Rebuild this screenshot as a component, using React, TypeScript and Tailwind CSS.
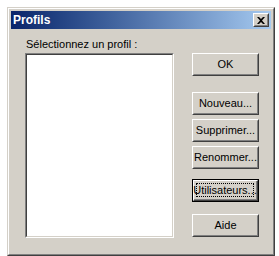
const buttons = [
  { label: 'OK', mt: 'mt-0' },
  { label: 'Nouveau...', mt: 'mt-[16px]' },
  { label: 'Supprimer...', mt: 'mt-[4px]' },
  { label: 'Renommer...', mt: 'mt-[4px]' },
];

function Button({ label, className = '' }: { label: string; className?: string }) {
  return (
    <div className={`w-[67px] h-[23px] border border-t-white border-l-white border-r-[#404040] border-b-[#404040] ${className}`}>
      <div className="h-full border border-t-[#d4d0c8] border-l-[#d4d0c8] border-r-[#808080] border-b-[#808080] flex items-center justify-center text-[11px] text-black">
        {label}
      </div>
    </div>
  );
}

export default function App() {
  return (
    <div className="min-h-screen bg-white pt-[7px] pl-[7px]" style={{ fontFamily: '"Liberation Sans", Arial, sans-serif' }}>
      <div className="w-[268px] h-[249px] bg-[#d4d0c8] border border-t-[#d4d0c8] border-l-[#d4d0c8] border-r-[#404040] border-b-[#404040]">
        <div className="h-full border border-t-white border-l-white border-r-[#808080] border-b-[#808080] p-[2px] flex flex-col">
          {/* title bar */}
          <div className="h-[18px] flex items-center justify-between pl-[2px] pr-[2px] bg-gradient-to-r from-[#0a246a] to-[#a6caf0]">
            <span className="text-white font-bold text-[12px] leading-none">Profils</span>
            <div className="w-[16px] h-[14px] border border-t-white border-l-white border-r-[#404040] border-b-[#404040]">
              <div className="h-full border border-t-[#d4d0c8] border-l-[#d4d0c8] border-r-[#808080] border-b-[#808080] bg-[#d4d0c8] flex items-center justify-center">
                <svg width="8" height="7" viewBox="0 0 8 7">
                  <path d="M0 0h2l2 2 2-2h2L5 3.5 8 7H6L4 5 2 7H0l3-3.5z" fill="black" />
                </svg>
              </div>
            </div>
          </div>

          {/* body */}
          <div className="flex pl-[14px] pt-[9px]">
            <div className="flex flex-col">
              <div className="text-[11px] leading-[13px] text-black pl-[1px]">Sélectionnez un profil :</div>
              <div className="mt-[2px] w-[149px] h-[185px] border border-t-[#808080] border-l-[#808080] border-r-white border-b-white">
                <div className="h-full border border-t-[#404040] border-l-[#404040] border-r-[#d4d0c8] border-b-[#d4d0c8] bg-white" />
              </div>
            </div>

            <div className="flex flex-col ml-[18px] pt-[15px]">
              {buttons.map((b) => (
                <Button key={b.label} label={b.label} className={b.mt} />
              ))}
              <div className="mt-[10px] w-[67px] h-[23px] border border-black">
                <div className="h-full border border-t-white border-l-white border-r-[#404040] border-b-[#404040]">
                  <div className="h-full border-r border-b border-r-[#808080] border-b-[#808080] flex items-center justify-center p-[2px]">
                    <div className="w-full h-full border border-dotted border-black flex items-center justify-center text-[11px] text-black">
                      Utilisateurs...
                    </div>
                  </div>
                </div>
              </div>
              <Button label="Aide" className="mt-[12px]" />
            </div>
          </div>
        </div>
      </div>
    </div>
  );
}
